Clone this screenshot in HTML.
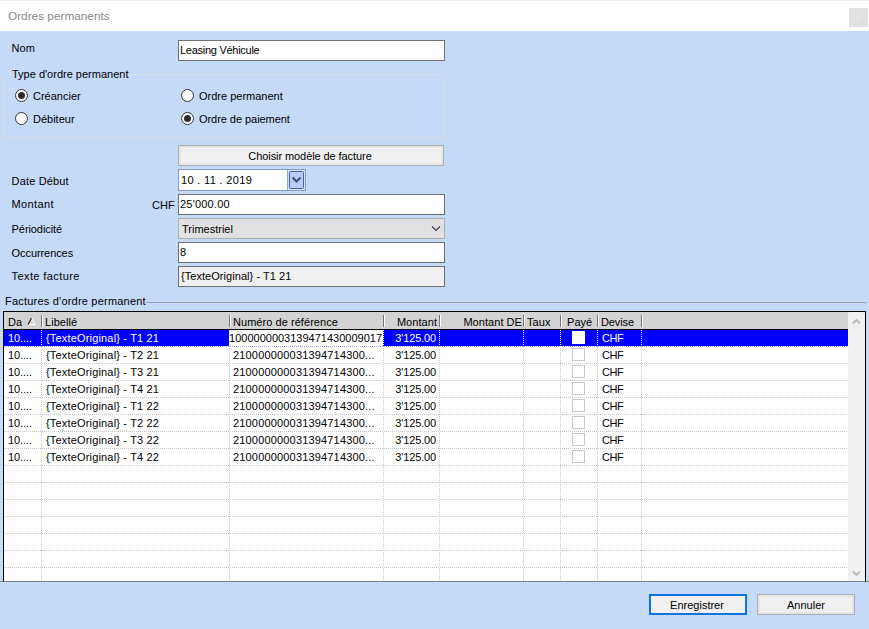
<!DOCTYPE html>
<html lang="fr">
<head>
<meta charset="utf-8">
<title>Ordres permanents</title>
<style>
html,body{margin:0;padding:0;}
body{width:869px;height:629px;overflow:hidden;background:#c5d9f8;position:relative;
  font-family:"Liberation Sans",sans-serif;font-size:11px;color:#000;line-height:13px;}
.abs{position:absolute;white-space:pre;}
#titlebar{position:absolute;left:0;top:0;width:869px;height:31px;background:#fff;border-top:1px solid #f0f0f0;box-sizing:border-box;}
#title{position:absolute;left:8px;top:8px;font-size:11.8px;color:#888;line-height:14px;}
#closebtn{position:absolute;left:849px;top:8px;width:19px;height:19px;background:#e1e1e1;color:#ececec;font-size:9px;line-height:19px;text-align:center;}
.lbl{position:absolute;left:11.6px;white-space:pre;}
.inp{position:absolute;left:178px;width:267px;height:21px;box-sizing:border-box;border:1px solid #707070;background:#fff;padding:3px 0 0 1px;white-space:pre;line-height:13px;}
.ro{background:#f0f0f0;}
.btn{position:absolute;box-sizing:border-box;height:21px;border:1px solid #adadad;background:#f0f0f0;box-shadow:inset 0 0 0 2px #e5e5e5;text-align:center;line-height:13px;padding-top:4px;white-space:pre;}
.radio{position:absolute;width:13px;height:13px;box-sizing:border-box;border:1px solid #333;border-radius:50%;background:#fff;}
.radio.on::after{content:"";position:absolute;left:2px;top:2px;width:7px;height:7px;border-radius:50%;background:#2e2e2e;}
#group{position:absolute;left:3px;top:74px;width:442px;height:64px;box-sizing:border-box;border:1px solid #d7dee5;border-radius:3px;}
#grouplbl{position:absolute;left:10px;top:68px;padding:0 2px;background:#c5d9f8;white-space:pre;}
#grid{position:absolute;left:3px;top:311px;width:863px;height:271px;box-sizing:border-box;border:1px solid #000;border-bottom:1px solid #828282;background:#fff;overflow:hidden;}
#ghead{position:absolute;left:0;top:0;width:844px;height:17px;background:#d3d3d3;border-bottom:1px solid #000;}
.hsep{position:absolute;top:3px;width:1px;height:12px;background:#757575;box-shadow:1px 0 0 #fff;}
.hc{position:absolute;top:4px;white-space:pre;line-height:13px;letter-spacing:0.05px;}
.vdot{position:absolute;top:18px;width:1px;height:252px;background-image:linear-gradient(to bottom,#c6c6c6 50%,rgba(255,255,255,0) 50%);background-size:1px 2px;}
.row{position:absolute;left:0;width:844px;height:17px;box-sizing:border-box;border-bottom:1px solid transparent;
  background-image:linear-gradient(to right,#c6c6c6 50%,rgba(255,255,255,0) 50%);background-size:2px 1px;background-repeat:repeat-x;background-position:0 16px;}
.row span{position:absolute;top:2px;white-space:pre;line-height:13px;letter-spacing:0.17px;}
.row.sel{color:#fff;background-image:linear-gradient(to right,#a0a0ff 50%,rgba(255,255,255,0) 50%);}
.wd{z-index:2;position:absolute;top:0;width:1px;height:16px;background-image:linear-gradient(to bottom,#fff 50%,rgba(255,255,255,0) 50%);background-size:1px 2px;}
.row.sel::before{content:"";position:absolute;left:0;top:0;width:844px;height:16px;background:#0000ff;}
.editcell{position:absolute;left:225px;top:0;width:154px;height:16px;background:#fff;overflow:hidden;color:#000;}
.row .editcell span{right:1px;top:2px;letter-spacing:0;}
.cb{position:absolute;left:568px;top:1px;width:13px;height:13px;box-sizing:border-box;border:1px solid #c8c8c8;background:#fff;}
.sel .cb{border-color:#fff;}
#vscroll{position:absolute;left:844px;top:0;width:17px;height:269px;background:#f0f0f0;}
</style>
</head>
<body>
<div id="titlebar"><div id="title">Ordres permanents</div></div>
<div id="closebtn">x</div>

<div class="lbl" style="top:42px">Nom</div>
<div class="inp" style="top:40px;letter-spacing:-0.27px">Leasing Véhicule</div>

<div id="group"></div>
<div id="grouplbl">Type d'ordre permanent</div>
<div class="radio on" style="left:15px;top:89px"></div><div class="abs" style="left:33px;top:90px">Créancier</div>
<div class="radio" style="left:15px;top:112px"></div><div class="abs" style="left:33px;top:113px">Débiteur</div>
<div class="radio" style="left:181px;top:89px"></div><div class="abs" style="left:199px;top:90px">Ordre permanent</div>
<div class="radio on" style="left:181px;top:112px"></div><div class="abs" style="left:199px;top:113px;letter-spacing:-0.05px">Ordre de paiement</div>

<div class="btn" style="left:178px;top:145px;width:266px;letter-spacing:-0.08px;padding-right:2px">Choisir modèle de facture</div>

<div class="lbl" style="top:175px;letter-spacing:0.15px">Date Début</div>
<div id="date" style="position:absolute;left:178px;top:169px;width:128px;height:22px;box-sizing:border-box;border:1px solid #7a9fd0;background:#fff;">
  <div class="abs" style="left:2px;top:4px;letter-spacing:0.33px">10 . 11 . 2019</div>
  <div style="position:absolute;left:108px;top:0;width:1px;height:20px;background:#86a8d3;"></div>
  <div style="position:absolute;left:109px;top:0;width:17px;height:20px;background:#d3e2f8;"></div>
  <div style="position:absolute;left:110px;top:1px;width:15px;height:18px;box-sizing:border-box;border:1px solid #4e6294;border-radius:1.5px;background:#b6cdf7;">
    <svg width="13" height="16" viewBox="0 0 13 16" style="position:absolute;left:0;top:0"><path d="M2.5 5.5 L6.5 9.5 L10.5 5.5" fill="none" stroke="#3d4f75" stroke-width="2"/></svg>
  </div>
</div>

<div class="lbl" style="top:198px;letter-spacing:0.35px">Montant</div>
<div class="abs" style="left:152px;top:199px">CHF</div>
<div class="inp" style="top:194px;letter-spacing:0.2px">25'000.00</div>

<div class="lbl" style="top:223px;letter-spacing:-0.08px">Périodicité</div>
<div class="inp" style="top:218px;background:#e1e1e1;border-color:#adadad;padding:4px 0 0 3px">Trimestriel
  <svg width="10" height="6" viewBox="0 0 10 6" style="position:absolute;left:252px;top:7px"><path d="M1 0.5 L5 4.5 L9 0.5" fill="none" stroke="#3c3c3c" stroke-width="1.15"/></svg>
</div>

<div class="lbl" style="top:247px;letter-spacing:-0.08px">Occurrences</div>
<div class="inp" style="top:242px">8</div>

<div class="lbl" style="top:270px;letter-spacing:0.4px">Texte facture</div>
<div class="inp ro" style="top:266px;padding-left:2px;letter-spacing:0.05px">{TexteOriginal} - T1 21</div>

<div class="abs" style="left:5px;top:295px;letter-spacing:0.21px">Factures d'ordre permanent</div>
<div style="position:absolute;left:146px;top:302px;width:720px;height:1px;background:#98a1a6"></div>

<div style="position:absolute;left:0;top:581px;width:869px;height:1px;background:#868686"></div>
<div id="grid">
  <div id="ghead">
    <div class="hc" style="left:4px">Da</div>
    <svg width="9" height="9" viewBox="0 0 9 9" style="position:absolute;left:23px;top:5px"><path d="M1 7.5 H8 L4.5 1" fill="none" stroke="#fff" stroke-width="1"/><path d="M1 7.5 L4.5 1" fill="none" stroke="#222" stroke-width="1.2"/></svg>
    <div class="hsep" style="left:37px"></div><div class="hc" style="left:41px">Libellé</div>
    <div class="hsep" style="left:225px"></div><div class="hc" style="left:229px">Numéro de référence</div>
    <div class="hsep" style="left:379px"></div><div class="hc" style="right:411px">Montant</div>
    <div class="hsep" style="left:435px"></div><div class="hc" style="right:326px">Montant DE</div>
    <div class="hsep" style="left:519px"></div><div class="hc" style="left:523px">Taux</div>
    <div class="hsep" style="left:556px"></div><div class="hc" style="left:563px">Payé</div>
    <div class="hsep" style="left:593px"></div><div class="hc" style="left:597px;letter-spacing:-0.1px">Devise</div>
    <div class="hsep" style="left:637px"></div>
  </div>
  <div id="rows">
    <div class="row sel" style="top:18px"><div class="wd" style="left:37px"></div><div class="wd" style="left:225px"></div><div class="wd" style="left:379px"></div><div class="wd" style="left:435px"></div><div class="wd" style="left:519px"></div><div class="wd" style="left:556px"></div><div class="wd" style="left:593px"></div><div class="wd" style="left:637px"></div><span style="left:4px;letter-spacing:-0.1px">10....</span><span style="left:42px">{TexteOriginal} - T1 21</span><div class="editcell"><span>21000000003139471430009017</span></div><span style="right:412px;letter-spacing:-0.15px">3'125.00</span><div class="cb"></div><span style="left:598px;letter-spacing:-0.4px">CHF</span></div>
    <div class="row" style="top:35px"><span style="left:4px;letter-spacing:-0.1px">10....</span><span style="left:42px">{TexteOriginal} - T2 21</span><span style="left:229px">210000000031394714300...</span><span style="right:412px;letter-spacing:-0.15px">3'125.00</span><div class="cb"></div><span style="left:598px;letter-spacing:-0.4px">CHF</span></div>
    <div class="row" style="top:52px"><span style="left:4px;letter-spacing:-0.1px">10....</span><span style="left:42px">{TexteOriginal} - T3 21</span><span style="left:229px">210000000031394714300...</span><span style="right:412px;letter-spacing:-0.15px">3'125.00</span><div class="cb"></div><span style="left:598px;letter-spacing:-0.4px">CHF</span></div>
    <div class="row" style="top:69px"><span style="left:4px;letter-spacing:-0.1px">10....</span><span style="left:42px">{TexteOriginal} - T4 21</span><span style="left:229px">210000000031394714300...</span><span style="right:412px;letter-spacing:-0.15px">3'125.00</span><div class="cb"></div><span style="left:598px;letter-spacing:-0.4px">CHF</span></div>
    <div class="row" style="top:86px"><span style="left:4px;letter-spacing:-0.1px">10....</span><span style="left:42px">{TexteOriginal} - T1 22</span><span style="left:229px">210000000031394714300...</span><span style="right:412px;letter-spacing:-0.15px">3'125.00</span><div class="cb"></div><span style="left:598px;letter-spacing:-0.4px">CHF</span></div>
    <div class="row" style="top:103px"><span style="left:4px;letter-spacing:-0.1px">10....</span><span style="left:42px">{TexteOriginal} - T2 22</span><span style="left:229px">210000000031394714300...</span><span style="right:412px;letter-spacing:-0.15px">3'125.00</span><div class="cb"></div><span style="left:598px;letter-spacing:-0.4px">CHF</span></div>
    <div class="row" style="top:120px"><span style="left:4px;letter-spacing:-0.1px">10....</span><span style="left:42px">{TexteOriginal} - T3 22</span><span style="left:229px">210000000031394714300...</span><span style="right:412px;letter-spacing:-0.15px">3'125.00</span><div class="cb"></div><span style="left:598px;letter-spacing:-0.4px">CHF</span></div>
    <div class="row" style="top:137px"><span style="left:4px;letter-spacing:-0.1px">10....</span><span style="left:42px">{TexteOriginal} - T4 22</span><span style="left:229px">210000000031394714300...</span><span style="right:412px;letter-spacing:-0.15px">3'125.00</span><div class="cb"></div><span style="left:598px;letter-spacing:-0.4px">CHF</span></div>
    <div class="row" style="top:154px"></div>
    <div class="row" style="top:171px"></div>
    <div class="row" style="top:188px"></div>
    <div class="row" style="top:205px"></div>
    <div class="row" style="top:222px"></div>
    <div class="row" style="top:239px"></div>
    <div class="row" style="top:256px"></div>
  </div>
  <div class="vdot" style="left:37px"></div>
  <div class="vdot" style="left:225px"></div>
  <div class="vdot" style="left:379px"></div>
  <div class="vdot" style="left:435px"></div>
  <div class="vdot" style="left:519px"></div>
  <div class="vdot" style="left:556px"></div>
  <div class="vdot" style="left:593px"></div>
  <div class="vdot" style="left:637px"></div>
  <div id="vscroll">
    <svg width="17" height="269" viewBox="0 0 17 269"><path d="M5 11.5 L8.5 8 L12 11.5" fill="none" stroke="#bdbdbd" stroke-width="2"/><path d="M5 259.5 L8.5 263 L12 259.5" fill="none" stroke="#bdbdbd" stroke-width="2"/></svg>
  </div>
</div>

<div class="btn" style="left:649px;top:594px;width:98px;border:2px solid #0f73d9;box-shadow:none;padding-top:3px;padding-right:2px">Enregistrer</div>
<div class="btn" style="left:757px;top:594px;width:98px">Annuler</div>
</body>
</html>
